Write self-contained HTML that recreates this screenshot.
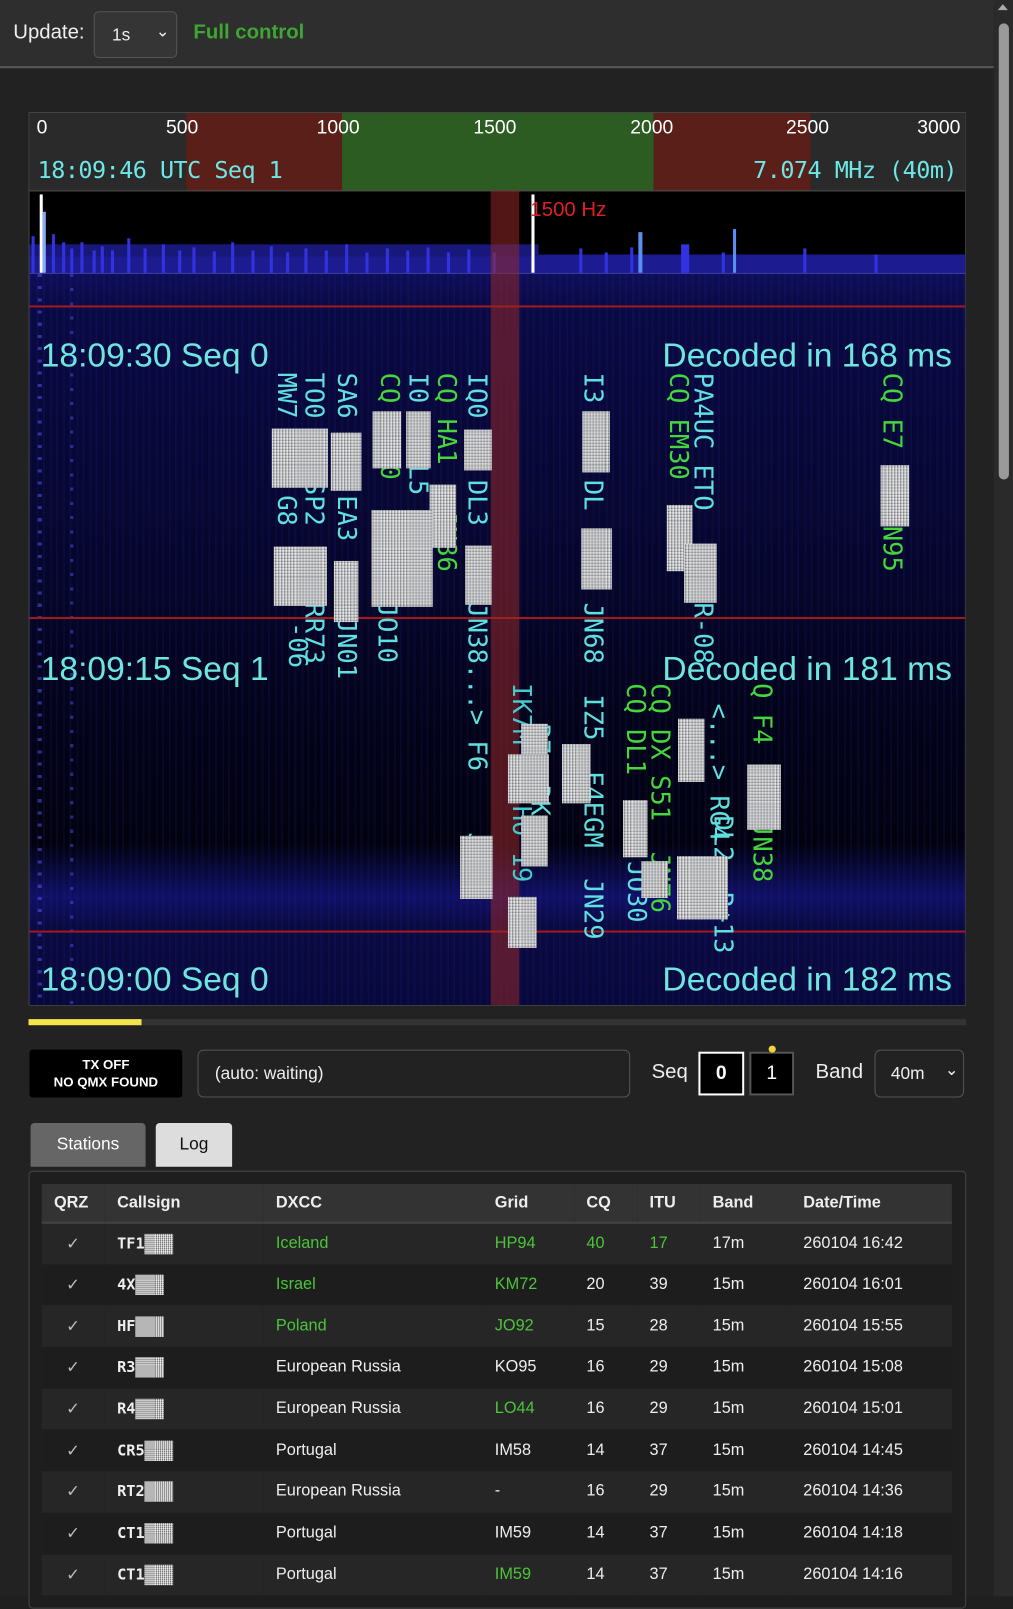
<!DOCTYPE html>
<html><head><meta charset="utf-8"><style>
*{box-sizing:border-box;margin:0;padding:0}
html,body{width:1013px;height:1596px;overflow:hidden;background:#1f1f1f;font-family:"Liberation Sans",sans-serif}
#w{position:absolute;left:0;top:0;width:995px;height:1568px;transform:scale(1.01809);transform-origin:0 0;background:#222}
.a{position:absolute}
.top{left:0;top:0;width:976px;height:67px;background:#2e2e2e;border-bottom:2px solid #5a5a5a}
.sb{left:976px;top:0;width:19px;height:1568px;background:#2a2a2a}
.th{left:981px;top:23px;width:10px;height:448px;background:#9a9a9a;border-radius:5px}
.v{position:absolute;writing-mode:vertical-rl;font-family:"DejaVu Sans Mono","Liberation Mono",monospace;font-size:25px;color:#5fe0e0;line-height:27px;white-space:nowrap}
.g{color:#44d63c}
.n{position:absolute;background-color:#b4b4b4;background-image:repeating-linear-gradient(90deg,rgba(255,255,255,.45) 0 1px,rgba(0,0,0,.15) 1px 2px,rgba(200,220,255,.3) 2px 3px),repeating-linear-gradient(0deg,rgba(255,255,255,.35) 0 1px,rgba(60,60,60,.25) 1px 2px,rgba(255,230,200,.2) 2px 3px)}
.lbl{position:absolute;font-size:33px;color:#6ee6e0;white-space:nowrap}
.rl{position:absolute;left:0;width:921px;height:2px;background:#a41a1a}
table{border-collapse:collapse;width:894px;font-size:16px;color:#eee}
th{background:#333;height:38px;text-align:left;font-weight:bold;border-bottom:2px solid #444}
td{height:40.7px}
tr:nth-child(even) td{background:#262626}
tr:nth-child(odd) td{background:#1d1d1d}
.c{font-family:"DejaVu Sans Mono",monospace;font-weight:bold;font-size:15px}
.cn{display:inline-block;width:28px;height:20px;vertical-align:middle;background-color:#bbb;background-image:repeating-linear-gradient(90deg,rgba(255,255,255,.5) 0 1px,rgba(0,0,0,.2) 1px 2px),repeating-linear-gradient(0deg,rgba(255,255,255,.4) 0 1px,rgba(0,0,0,.2) 1px 2px)}
.gr{color:#4cc43a}
</style></head><body><div id="w">
<div class="a top"></div>
<div class="a" style="left:13px;top:21px;font-size:20px;color:#eee">Update:</div>
<div class="a" style="left:92px;top:11px;width:82px;height:46px;background:#353535;border:1px solid #555;border-radius:5px;color:#eee;font-size:17px;padding:13px 0 0 17px">1s<span style="position:absolute;left:60px;top:9px;font-size:16px">&#8964;</span></div>
<div class="a" style="left:190px;top:21px;font-size:20px;font-weight:bold;color:#3ea632">Full control</div>
<div class="a sb"></div><div class="a th"></div>
<div class="a" style="left:980px;top:4px;width:0;height:0;border-left:5px solid transparent;border-right:5px solid transparent;border-bottom:6px solid #aaa"></div>

<!-- waterfall -->
<div class="a" style="left:28px;top:110px;width:921px;height:878px;overflow:hidden;border:1px solid #444;background:#000">
 <div class="a" style="left:0;top:0;width:921px;height:76px;background:#2a2a2a"></div>
 <div class="a" style="left:154px;top:0;width:153px;height:76px;background:#5a1f19"></div>
 <div class="a" style="left:307px;top:0;width:306px;height:76px;background:#2c5c22"></div>
 <div class="a" style="left:613px;top:0;width:154px;height:76px;background:#5a1f19"></div>
 <div class="a" style="left:0;top:4px;width:921px;font-size:19px;color:#fff">
  <span class="a" style="left:7px">0</span><span class="a" style="left:134px">500</span><span class="a" style="left:282px">1000</span><span class="a" style="left:436px">1500</span><span class="a" style="left:590px">2000</span><span class="a" style="left:743px">2500</span><span class="a" style="left:872px">3000</span></div>
 <div class="a" style="left:8px;top:44px;font-family:'DejaVu Sans Mono',monospace;font-size:23px;color:#6ee6e6;letter-spacing:-0.5px">18:09:46 UTC Seq 1</div>
 <div class="a" style="right:8px;top:44px;font-family:'DejaVu Sans Mono',monospace;font-size:23px;color:#6ee6e6;letter-spacing:-0.5px">7.074 MHz (40m)</div>
 <div class="a" style="left:0;top:76px;width:921px;height:1px;background:#555"></div>
 <!-- spectrum -->
 <svg class="a" style="left:0;top:77px" width="921" height="82">
  <rect x="0" y="62" width="921" height="18" fill="#1c1c90"/>
  <rect x="0" y="52" width="500" height="12" fill="#18187a"/>
  <g fill="#3232e0">
   <rect x="2" y="44" width="3" height="36"/><rect x="22" y="42" width="3" height="38"/><rect x="32" y="50" width="3" height="30"/><rect x="40" y="56" width="3" height="24"/><rect x="50" y="50" width="3" height="30"/><rect x="62" y="58" width="3" height="22"/><rect x="70" y="54" width="3" height="26"/><rect x="80" y="58" width="3" height="22"/><rect x="96" y="46" width="3" height="34"/><rect x="112" y="56" width="3" height="24"/><rect x="130" y="52" width="3" height="28"/><rect x="146" y="58" width="3" height="22"/><rect x="160" y="55" width="3" height="25"/><rect x="180" y="59" width="3" height="21"/><rect x="198" y="50" width="3" height="30"/><rect x="218" y="58" width="3" height="22"/><rect x="236" y="54" width="3" height="26"/><rect x="252" y="60" width="3" height="20"/><rect x="270" y="56" width="3" height="24"/><rect x="290" y="58" width="3" height="22"/><rect x="310" y="52" width="3" height="28"/><rect x="330" y="60" width="3" height="20"/><rect x="350" y="56" width="3" height="24"/><rect x="370" y="58" width="3" height="22"/><rect x="390" y="55" width="3" height="25"/><rect x="410" y="60" width="3" height="20"/><rect x="430" y="57" width="3" height="23"/><rect x="455" y="60" width="3" height="20"/><rect x="540" y="56" width="3" height="24"/><rect x="565" y="60" width="3" height="20"/><rect x="590" y="55" width="3" height="25"/><rect x="640" y="52" width="8" height="28"/><rect x="680" y="60" width="3" height="20"/><rect x="760" y="56" width="3" height="24"/><rect x="830" y="62" width="3" height="18"/>
  </g>
  <rect x="10" y="3" width="3" height="77" fill="#fff"/><rect x="13" y="20" width="3" height="60" fill="#8af"/>
  <rect x="493" y="3" width="3" height="77" fill="#fff"/>
  <rect x="598" y="40" width="4" height="40" fill="#5a8ef0"/><rect x="691" y="37" width="3" height="43" fill="#5a8ef0"/>
 </svg>
 <div class="a" style="left:0;top:157px;width:921px;height:1px;background:#4848c8"></div>
 <!-- waterfall body -->
 <div class="a" style="left:0;top:158px;width:921px;height:720px;background:linear-gradient(180deg,#0e0e58 0,#0a0a44 30px,#08083a 120px,#06062a 300px,#03031a 420px,#02020e 560px,#101066 612px,#0a0a40 640px,#08083a 720px)"></div>
 <div class="a" style="left:0;top:158px;width:921px;height:720px;background:repeating-linear-gradient(90deg,rgba(40,40,200,.12) 0 2px,transparent 2px 7px,rgba(60,60,230,.08) 7px 9px,transparent 9px 13px)"></div>
 <div class="a" style="left:8px;top:158px;width:4px;height:720px;background:repeating-linear-gradient(180deg,rgba(90,90,255,.5) 0 3px,transparent 3px 12px)"></div>
 <div class="a" style="left:40px;top:158px;width:3px;height:720px;background:repeating-linear-gradient(180deg,rgba(90,90,255,.45) 0 3px,transparent 3px 14px)"></div>
 <div class="rl" style="top:189px"></div><div class="rl" style="top:495px"></div><div class="rl" style="top:803px"></div>
 <div class="a" style="left:453px;top:76px;width:28px;height:802px;background:rgba(150,40,40,.55)"></div>
 <div class="a" style="left:492px;top:84px;font-size:20px;color:#e02020">1500 Hz</div>
 <div class="lbl" style="left:11px;top:219px">18:09:30 Seq 0</div><div class="lbl" style="right:13px;top:219px">Decoded in 168 ms</div>
 <div class="lbl" style="left:11px;top:527px">18:09:15 Seq 1</div><div class="lbl" style="right:13px;top:527px">Decoded in 181 ms</div>
 <div class="lbl" style="left:11px;top:832px">18:09:00 Seq 0</div><div class="lbl" style="right:13px;top:832px">Decoded in 182 ms</div>
 <!-- decodes -->
 <div class="v" style="left:239px;top:255px">MW7&nbsp;&nbsp;&nbsp;&nbsp;&nbsp;G8</div>
 <div class="v" style="left:266px;top:255px">TO0&nbsp;&nbsp;&nbsp;&nbsp;SP2&nbsp;&nbsp;&nbsp;&nbsp;&nbsp;RR73</div>
 <div class="v" style="left:250px;top:500px">-06</div>
 <div class="v" style="left:298px;top:255px">SA6&nbsp;&nbsp;&nbsp;&nbsp;&nbsp;EA3&nbsp;&nbsp;&nbsp;&nbsp;&nbsp;JN01</div>
 <div class="v g" style="left:340px;top:255px">CQ HG80</div>
 <div class="v" style="left:338px;top:480px">JO10</div>
 <div class="v" style="left:368px;top:255px">I0&nbsp;&nbsp;&nbsp;DL5&nbsp;&nbsp;JN68</div>
 <div class="v g" style="left:396px;top:255px">CQ HA1&nbsp;&nbsp;&nbsp;JN86</div>
 <div class="v" style="left:426px;top:255px">IQ0&nbsp;&nbsp;&nbsp;&nbsp;DL3&nbsp;&nbsp;&nbsp;&nbsp;&nbsp;JN38...&gt; F6&nbsp;&nbsp;&nbsp;&nbsp;JN24</div>
 <div class="v" style="left:470px;top:560px;color:#48c8c8">IK7M&nbsp;&nbsp;&nbsp;&nbsp;H0&nbsp;19 RR</div>
 <div class="v" style="left:488px;top:600px">R7&nbsp;&nbsp;DK</div>
 <div class="v" style="left:540px;top:255px">I3&nbsp;&nbsp;&nbsp;&nbsp;&nbsp;DL&nbsp;&nbsp;&nbsp;&nbsp;&nbsp;&nbsp;JN68&nbsp;&nbsp;IZ5&nbsp;&nbsp;F4EGM&nbsp;&nbsp;JN29</div>
 <div class="v g" style="left:582px;top:560px">CQ DL1</div>
 <div class="v" style="left:583px;top:735px">JO30</div>
 <div class="v g" style="left:606px;top:560px">CQ DX S51&nbsp;&nbsp;JN76</div>
 <div class="v g" style="left:624px;top:255px">CQ EM30</div>
 <div class="v" style="left:648px;top:255px">PA4UC&nbsp;ETO&nbsp;&nbsp;&nbsp;&nbsp;&nbsp;&nbsp;R-08</div>
 <div class="v" style="left:664px;top:580px">&lt;...&gt; RG4</div>
 <div class="v" style="left:668px;top:690px">DL2&nbsp;&nbsp;R+13</div>
 <div class="v g" style="left:706px;top:560px">Q F4&nbsp;&nbsp;&nbsp;&nbsp;&nbsp;JN38</div>
 <div class="v g" style="left:834px;top:255px">CQ E7&nbsp;&nbsp;&nbsp;&nbsp;JN95</div>
 <div class="n" style="left:238px;top:310px;width:55px;height:58px"></div>
 <div class="n" style="left:240px;top:426px;width:52px;height:58px"></div>
 <div class="n" style="left:296px;top:314px;width:30px;height:57px"></div>
 <div class="n" style="left:299px;top:440px;width:24px;height:60px"></div>
 <div class="n" style="left:337px;top:293px;width:28px;height:56px"></div>
 <div class="n" style="left:370px;top:293px;width:24px;height:56px"></div>
 <div class="n" style="left:393px;top:365px;width:26px;height:62px"></div>
 <div class="n" style="left:336px;top:390px;width:60px;height:95px"></div>
 <div class="n" style="left:427px;top:311px;width:27px;height:40px"></div>
 <div class="n" style="left:428px;top:425px;width:26px;height:58px"></div>
 <div class="n" style="left:543px;top:293px;width:27px;height:60px"></div>
 <div class="n" style="left:542px;top:408px;width:30px;height:60px"></div>
 <div class="n" style="left:626px;top:385px;width:25px;height:65px"></div>
 <div class="n" style="left:643px;top:423px;width:32px;height:58px"></div>
 <div class="n" style="left:836px;top:346px;width:28px;height:60px"></div>
 <div class="n" style="left:423px;top:710px;width:32px;height:62px"></div>
 <div class="n" style="left:483px;top:600px;width:26px;height:40px"></div>
 <div class="n" style="left:470px;top:630px;width:40px;height:48px"></div>
 <div class="n" style="left:483px;top:690px;width:26px;height:50px"></div>
 <div class="n" style="left:470px;top:770px;width:28px;height:50px"></div>
 <div class="n" style="left:523px;top:620px;width:28px;height:58px"></div>
 <div class="n" style="left:583px;top:675px;width:24px;height:56px"></div>
 <div class="n" style="left:601px;top:735px;width:26px;height:36px"></div>
 <div class="n" style="left:637px;top:595px;width:26px;height:62px"></div>
 <div class="n" style="left:636px;top:730px;width:50px;height:62px"></div>
 <div class="n" style="left:705px;top:640px;width:33px;height:64px"></div>
</div>

<!-- progress -->
<div class="a" style="left:28px;top:1001px;width:921px;height:6px;background:#333"></div>
<div class="a" style="left:28px;top:1001px;width:111px;height:6px;background:#f2e44a"></div>

<!-- controls -->
<div class="a" style="left:29px;top:1031px;width:150px;height:47px;background:#000;border-radius:3px;color:#fff;font-weight:bold;font-size:13px;text-align:center;line-height:17px;padding-top:6px">TX OFF<br>NO QMX FOUND</div>
<div class="a" style="left:194px;top:1031px;width:425px;height:47px;background:#222;border:1px solid #555;border-radius:6px;color:#eee;font-size:17px;padding:13px 0 0 16px">(auto: waiting)</div>
<div class="a" style="left:640px;top:1042px;font-size:20px;color:#eee">Seq</div>
<div class="a" style="left:686px;top:1033px;width:45px;height:43px;background:#000;border:2px solid #fff;color:#fff;font-weight:bold;font-size:19px;text-align:center;line-height:39px">0</div>
<div class="a" style="left:736px;top:1033px;width:44px;height:43px;background:#000;border:2px solid #555;color:#fff;font-size:19px;text-align:center;line-height:39px">1</div>
<div class="a" style="left:755px;top:1027px;width:7px;height:7px;border-radius:50%;background:#f2d43a"></div>
<div class="a" style="left:801px;top:1042px;font-size:20px;color:#eee">Band</div>
<div class="a" style="left:859px;top:1031px;width:88px;height:47px;background:#222;border:1px solid #555;border-radius:6px;color:#eee;font-size:17px;padding:13px 0 0 15px">40m<span style="position:absolute;left:68px;top:9px;font-size:16px">&#8964;</span></div>

<!-- tabs -->
<div class="a" style="left:30px;top:1103px;width:113px;height:43px;background:#666;border-radius:4px 4px 0 0;color:#fff;font-size:17px;text-align:center;line-height:42px">Stations</div>
<div class="a" style="left:153px;top:1103px;width:75px;height:43px;background:#ddd;border-radius:4px 4px 0 0;color:#111;font-size:17px;text-align:center;line-height:42px">Log</div>

<div class="a" style="left:28px;top:1150px;width:921px;height:430px;border:1px solid #444;border-radius:4px;background:#1e1e1e"></div>
<div class="a" style="left:41px;top:1163px">
<table>
<tr><th style="width:62px;padding-left:12px">QRZ</th><th style="width:156px;padding-left:12px">Callsign</th><th style="width:215px;padding-left:12px">DXCC</th><th style="width:90px;padding-left:12px">Grid</th><th style="width:62px;padding-left:12px">CQ</th><th style="width:62px;padding-left:12px">ITU</th><th style="width:89px;padding-left:12px">Band</th><th style="padding-left:12px">Date/Time</th></tr>
<tr><td style="padding-left:24px;color:#bbb">✓</td><td style="padding-left:12px" class="c">TF1<span class="cn"></span></td><td style="padding-left:12px" class="gr">Iceland</td><td style="padding-left:12px" class="gr">HP94</td><td style="padding-left:12px" class="gr">40</td><td style="padding-left:12px" class="gr">17</td><td style="padding-left:12px">17m</td><td style="padding-left:12px">260104 16:42</td></tr>
<tr><td style="padding-left:24px;color:#bbb">✓</td><td style="padding-left:12px" class="c">4X<span class="cn"></span></td><td style="padding-left:12px" class="gr">Israel</td><td style="padding-left:12px" class="gr">KM72</td><td style="padding-left:12px">20</td><td style="padding-left:12px">39</td><td style="padding-left:12px">15m</td><td style="padding-left:12px">260104 16:01</td></tr>
<tr><td style="padding-left:24px;color:#bbb">✓</td><td style="padding-left:12px" class="c">HF<span class="cn"></span></td><td style="padding-left:12px" class="gr">Poland</td><td style="padding-left:12px" class="gr">JO92</td><td style="padding-left:12px">15</td><td style="padding-left:12px">28</td><td style="padding-left:12px">15m</td><td style="padding-left:12px">260104 15:55</td></tr>
<tr><td style="padding-left:24px;color:#bbb">✓</td><td style="padding-left:12px" class="c">R3<span class="cn"></span></td><td style="padding-left:12px">European Russia</td><td style="padding-left:12px">KO95</td><td style="padding-left:12px">16</td><td style="padding-left:12px">29</td><td style="padding-left:12px">15m</td><td style="padding-left:12px">260104 15:08</td></tr>
<tr><td style="padding-left:24px;color:#bbb">✓</td><td style="padding-left:12px" class="c">R4<span class="cn"></span></td><td style="padding-left:12px">European Russia</td><td style="padding-left:12px" class="gr">LO44</td><td style="padding-left:12px">16</td><td style="padding-left:12px">29</td><td style="padding-left:12px">15m</td><td style="padding-left:12px">260104 15:01</td></tr>
<tr><td style="padding-left:24px;color:#bbb">✓</td><td style="padding-left:12px" class="c">CR5<span class="cn"></span></td><td style="padding-left:12px">Portugal</td><td style="padding-left:12px">IM58</td><td style="padding-left:12px">14</td><td style="padding-left:12px">37</td><td style="padding-left:12px">15m</td><td style="padding-left:12px">260104 14:45</td></tr>
<tr><td style="padding-left:24px;color:#bbb">✓</td><td style="padding-left:12px" class="c">RT2<span class="cn"></span></td><td style="padding-left:12px">European Russia</td><td style="padding-left:12px">-</td><td style="padding-left:12px">16</td><td style="padding-left:12px">29</td><td style="padding-left:12px">15m</td><td style="padding-left:12px">260104 14:36</td></tr>
<tr><td style="padding-left:24px;color:#bbb">✓</td><td style="padding-left:12px" class="c">CT1<span class="cn"></span></td><td style="padding-left:12px">Portugal</td><td style="padding-left:12px">IM59</td><td style="padding-left:12px">14</td><td style="padding-left:12px">37</td><td style="padding-left:12px">15m</td><td style="padding-left:12px">260104 14:18</td></tr>
<tr><td style="padding-left:24px;color:#bbb">✓</td><td style="padding-left:12px" class="c">CT1<span class="cn"></span></td><td style="padding-left:12px">Portugal</td><td style="padding-left:12px" class="gr">IM59</td><td style="padding-left:12px">14</td><td style="padding-left:12px">37</td><td style="padding-left:12px">15m</td><td style="padding-left:12px">260104 14:16</td></tr>
</table></div>
</div></body></html>
